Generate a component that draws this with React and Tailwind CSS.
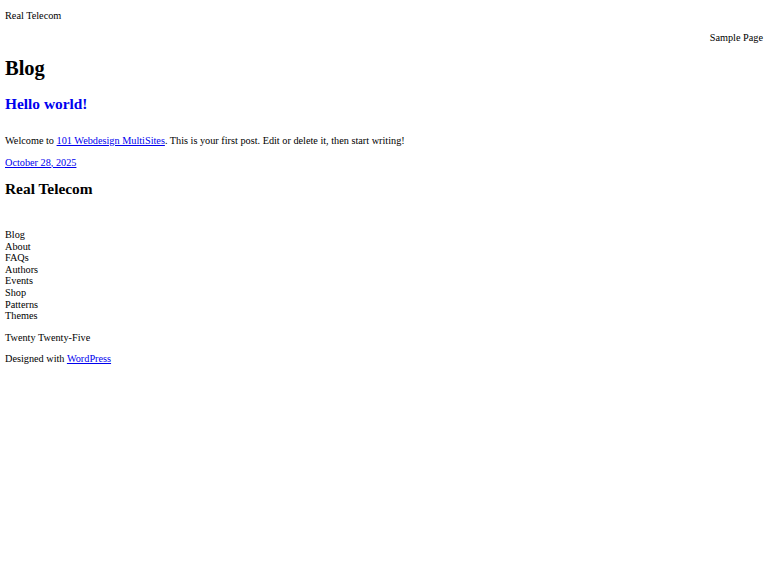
const NAV = ['Blog', 'About', 'FAQs', 'Authors', 'Events', 'Shop', 'Patterns', 'Themes'];

export default function App() {
  return (
    <div className="min-h-[576px] bg-white px-[5px] pt-[10px] text-[10.25px] leading-[11.5px] text-black font-['Liberation_Serif',serif]">
      {/* header */}
      <div>
        <p>Real Telecom</p>
        <div className="mt-[10px] flex justify-end">
          <span>Sample Page</span>
        </div>
      </div>

      {/* main */}
      <h1 className="mt-[14px] text-[20.5px] leading-[23px] font-bold">Blog</h1>
      <h2 className="mt-[15px] text-[15.4px] leading-[17px] font-bold">
        <a href="#" className="text-[#0000ee]">Hello world!</a>
      </h2>
      <p className="mt-[23px]">
        Welcome to <a href="#" className="text-[#0000ee] underline">101 Webdesign MultiSites</a>. This is your first post. Edit or delete it, then start writing!
      </p>
      <p className="mt-[10px]">
        <a href="#" className="text-[#0000ee] underline">October 28, 2025</a>
      </p>

      {/* footer */}
      <h2 className="mt-[12px] text-[15.4px] leading-[17px] font-bold">Real Telecom</h2>
      <ul className="mt-[32px] leading-[11.6px]">
        {NAV.map((n) => (
          <li key={n}>{n}</li>
        ))}
      </ul>
      <p className="mt-[10px]">Twenty Twenty-Five</p>
      <p className="mt-[10px]">
        Designed with <a href="#" className="text-[#0000ee] underline">WordPress</a>
      </p>
    </div>
  );
}
